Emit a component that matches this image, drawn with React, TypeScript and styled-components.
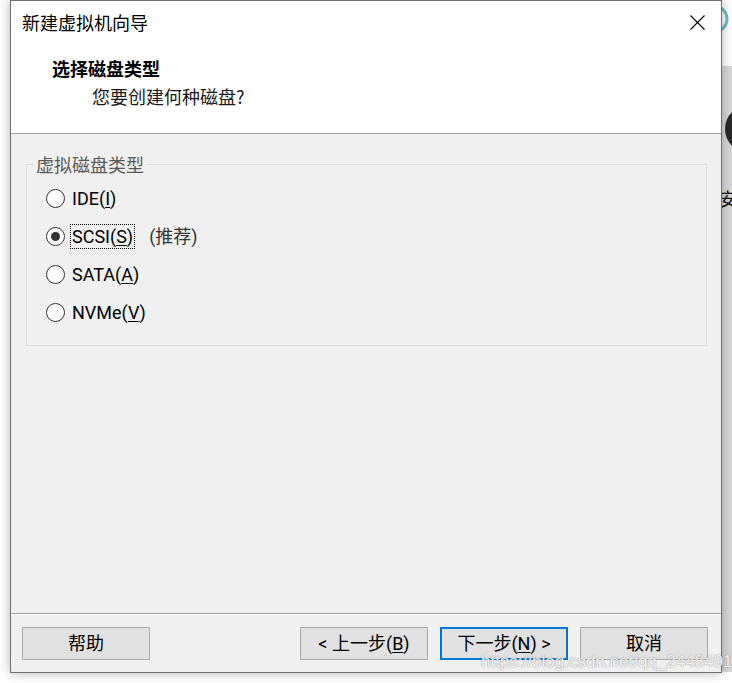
import React from "react";
import styled, { createGlobalStyle } from "styled-components";

const GlobalStyle = createGlobalStyle`
  html, body {
    margin: 0;
    padding: 0;
    background: #fff;
  }
  body {
    font-family: Roboto, "Noto Sans CJK SC", sans-serif;
    color: #000;
  }
`;

const CJK = `"Noto Sans CJK SC", "Noto Sans", sans-serif`;
const UI = `Roboto, "Noto Sans CJK SC", sans-serif`;

const Desktop = styled.div`
  position: relative;
  display: flex;
  width: 732px;
  height: 683px;
  overflow: hidden;
  background: #fff;
`;

const Wizard = styled.div`
  position: relative;
  z-index: 1;
  box-sizing: border-box;
  display: flex;
  flex-direction: column;
  flex: none;
  width: 712px;
  height: 673px;
  margin-left: 10px;
  border: 1px solid #6f6f6f;
  background: #f0f0f0;
  box-shadow: 0 0 11px rgba(0, 0, 0, 0.3);
`;

const Header = styled.header`
  box-sizing: border-box;
  height: 133px;
  padding: 9px 0 0 11px;
  background: #fff;
  border-bottom: 1px solid #a0a0a0;
`;

const TitleRow = styled.div`
  display: flex;
  align-items: center;
  justify-content: space-between;
  height: 24px;
  padding-right: 16px;
`;

const Title = styled.div`
  font: 18px/24px ${CJK};
  color: #000;
`;

const CloseIcon = styled.svg`
  width: 15px;
  height: 15px;
  display: block;
`;

const Heading = styled.div`
  margin: 22px 0 0 30px;
  font: 700 18px/24px ${CJK};
  color: #000;
`;

const SubHeading = styled.div`
  margin: 4px 0 0 70px;
  font: 18px/24px ${CJK};
  color: #1a1a1a;
`;

const Body = styled.main`
  flex: 1;
  padding: 18px 14px 0 15px;
`;

const GroupBox = styled.fieldset`
  margin: 0;
  padding: 3px 0 14px 0;
  border: 1px solid #dcdcdc;
  min-width: 0;
`;

const GroupLegend = styled.legend`
  margin-left: 7px;
  padding: 0 2px;
  font: 18px/24px ${CJK};
  color: #5a5a5a;
`;

const OptionRow = styled.label`
  display: flex;
  align-items: center;
  height: 38px;
  padding-left: 19px;
`;

const RadioMark = styled.span<{ $checked?: boolean }>`
  box-sizing: border-box;
  display: flex;
  align-items: center;
  justify-content: center;
  width: 19px;
  height: 19px;
  border: 1px solid #333;
  border-radius: 50%;
  background: #fff;
  &::after {
    content: "";
    display: ${(p) => (p.$checked ? "block" : "none")};
    width: 9px;
    height: 9px;
    border-radius: 50%;
    background: #333;
  }
`;

const OptionText = styled.span<{ $focused?: boolean }>`
  margin-left: 5px;
  padding: 0 1px;
  border: 1px dotted ${(p) => (p.$focused ? "#000" : "transparent")};
  font: 18px/23px ${UI};
  color: #000;
  u {
    text-decoration-thickness: 1px;
    text-underline-offset: 2px;
  }
`;

const Hint = styled.span`
  margin-left: 14px;
  font: 18px/23px ${UI};
  color: #333;
`;

const Footer = styled.footer`
  box-sizing: border-box;
  display: flex;
  justify-content: space-between;
  height: 59px;
  padding: 13px 13px 0 11px;
  border-top: 1px solid #a0a0a0;
  box-shadow: inset 0 1px 0 #fff;
`;

const ButtonGroup = styled.div`
  display: flex;
  gap: 12px;
`;

const DialogButton = styled.button<{ $default?: boolean }>`
  box-sizing: border-box;
  width: 128px;
  height: 33px;
  padding: 0;
  border: ${(p) => (p.$default ? "2px solid #0078d7" : "1px solid #adadad")};
  background: #e1e1e1;
  font: 18px/24px ${UI};
  color: #000;
  u {
    text-decoration-thickness: 1px;
    text-underline-offset: 2px;
  }
`;

const SideStrip = styled.div`
  flex: 1;
  display: flex;
  flex-direction: column;
  overflow: hidden;
`;

const SideTop = styled.div`
  height: 66px;
  background: #fff;
`;

const SideApp = styled.div`
  display: flex;
  flex-direction: column;
  height: 606px;
  background: #d8d8d8;
`;

const AppAvatar = styled.div`
  flex: none;
  width: 48px;
  height: 48px;
  margin: 39px 0 0 3px;
  border-radius: 50%;
  background: #2a2a2a;
`;

const AppLabel = styled.span`
  margin: 34px 0 0 -3px;
  font: 18px/22px ${CJK};
  color: #111;
  white-space: nowrap;
`;

const Watermark = styled.div`
  position: absolute;
  z-index: 2;
  left: 481px;
  top: 651px;
  font: 17px/22px "Liberation Sans", Arial, sans-serif;
  color: rgba(255, 255, 255, 0.85);
  text-shadow: 0 0 1px rgba(120, 120, 120, 0.7), 0 0 2px rgba(150, 150, 150, 0.5);
  white-space: nowrap;
  pointer-events: none;
`;

const options = [
  { label: "IDE", key: "I" },
  { label: "SCSI", key: "S", checked: true, hint: "(推荐)" },
  { label: "SATA", key: "A" },
  { label: "NVMe", key: "V" },
];

export default function App() {
  return (
    <>
      <GlobalStyle />
      <Desktop>
        <Wizard>
          <Header>
            <TitleRow>
              <Title>新建虚拟机向导</Title>
              <CloseIcon viewBox="0 0 15 15">
                <path d="M0.5 0.5 L14.5 14.5 M14.5 0.5 L0.5 14.5" stroke="#000" strokeWidth="1.1" />
              </CloseIcon>
            </TitleRow>
            <Heading>选择磁盘类型</Heading>
            <SubHeading>您要创建何种磁盘?</SubHeading>
          </Header>
          <Body>
            <GroupBox>
              <GroupLegend>虚拟磁盘类型</GroupLegend>
              {options.map((o) => (
                <OptionRow key={o.label}>
                  <RadioMark $checked={o.checked} />
                  <OptionText $focused={o.checked}>
                    {o.label}(<u>{o.key}</u>)
                  </OptionText>
                  {o.hint && <Hint>{o.hint}</Hint>}
                </OptionRow>
              ))}
            </GroupBox>
          </Body>
          <Footer>
            <DialogButton>帮助</DialogButton>
            <ButtonGroup>
              <DialogButton>
                &lt; 上一步(<u>B</u>)
              </DialogButton>
              <DialogButton $default>
                下一步(<u>N</u>) &gt;
              </DialogButton>
              <DialogButton>取消</DialogButton>
            </ButtonGroup>
          </Footer>
        </Wizard>
        <SideStrip>
          <SideTop>
            <svg width="10" height="66" viewBox="0 0 10 66">
              <circle cx="-8" cy="19" r="13" fill="none" stroke="#6cbcd0" strokeWidth="3" />
            </svg>
          </SideTop>
          <SideApp>
            <AppAvatar />
            <AppLabel>安装</AppLabel>
          </SideApp>
        </SideStrip>
        <Watermark>https://blog.csdn.net/qq_24484911</Watermark>
      </Desktop>
    </>
  );
}
